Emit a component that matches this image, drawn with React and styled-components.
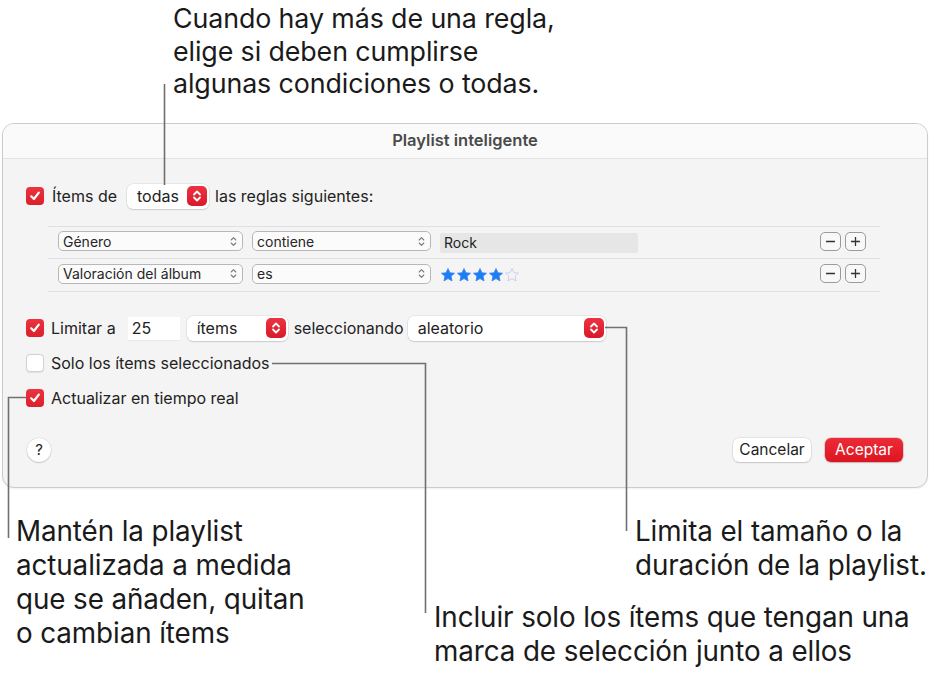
import React from 'react';
import styled, { createGlobalStyle } from 'styled-components';

const GlobalStyle = createGlobalStyle`
  html, body {
    margin: 0;
    padding: 0;
    background: #ffffff;
  }
  * {
    box-sizing: border-box;
  }
`;

const Page = styled.div`
  position: relative;
  width: 931px;
  height: 673px;
  overflow: hidden;
  background: #ffffff;
  color: #1f1f1f;
  font-family: Inter, "Noto Sans", sans-serif;
`;

const Note = styled.p`
  margin: 0;
  padding-left: 16px;
  font-size: 27.8px;
  line-height: 34px;
  color: #1a1a1a;
  letter-spacing: -0.1px;
`;

const TopNote = styled(Note)`
  padding: 2px 0 0 173px;
  font-size: 26.8px;
  line-height: 32.5px;
`;

const Window = styled.div`
  margin: 23px 0 0 2px;
  width: 926px;
  height: 365px;
  border: 1px solid #cbcbcb;
  border-radius: 12px;
  background: #f4f4f4;
  overflow: hidden;
  display: flex;
  flex-direction: column;
  box-shadow: 0 1px 2px rgba(0, 0, 0, 0.06);
`;

const TitleBar = styled.div`
  height: 35px;
  flex: none;
  background: #fafafa;
  border-bottom: 1px solid #e3e3e3;
  text-align: center;
  font-size: 16.5px;
  font-weight: 600;
  line-height: 32px;
  color: #4a4a4a;
`;

const Body = styled.div`
  flex: 1;
  display: flex;
  flex-direction: column;
  padding: 0 24px 0 23px;
  font-size: 16px;
  color: #222222;
`;

const Row = styled.div`
  display: flex;
  align-items: center;
  height: ${(p) => p.$h || 24}px;
  margin-top: ${(p) => p.$top || 0}px;
`;

const Box = styled.span`
  flex: none;
  width: 18px;
  height: 18px;
  border-radius: 4px;
  display: inline-flex;
  align-items: center;
  justify-content: center;
  margin-right: ${(p) => p.$gap || 7}px;
  background: ${(p) => (p.$on ? 'linear-gradient(#ea3440, #dc1f2b)' : '#ffffff')};
  border: ${(p) => (p.$on ? 'none' : '1px solid #d2d2d2')};
  box-shadow: ${(p) => (p.$on ? 'none' : '0 0.5px 1px rgba(0,0,0,0.08)')};
`;

const Label = styled.span`
  margin-right: ${(p) => p.$gap || 0}px;
  white-space: nowrap;
`;

const Popup = styled.span`
  flex: none;
  display: inline-flex;
  align-items: center;
  justify-content: space-between;
  width: ${(p) => p.$w}px;
  height: 25px;
  padding: 0 2px 0 10px;
  margin-right: ${(p) => p.$gap || 0}px;
  background: #ffffff;
  border-radius: 6px;
  box-shadow: 0 0 0 0.5px rgba(0, 0, 0, 0.1), 0 1px 1.5px rgba(0, 0, 0, 0.12);
`;

const Stepper = styled.span`
  width: 20px;
  height: 20px;
  border-radius: 5px;
  background: linear-gradient(#ec3341, #d9192a);
  display: inline-flex;
  align-items: center;
  justify-content: center;
`;

const Field = styled.span`
  flex: none;
  width: 52px;
  height: 23px;
  padding-left: 4px;
  margin-right: 7px;
  background: #ffffff;
  line-height: 23px;
  box-shadow: 0 0.5px 0 rgba(0, 0, 0, 0.08);
`;

const Rules = styled.div`
  margin: 17px 0 0 22px;
  width: 832px;
  border-top: 1px solid #e0e0e0;
`;

const RuleRow = styled.div`
  display: flex;
  align-items: center;
  height: ${(p) => p.$h || 32}px;
  padding: 0 14px 2px 10px;
  border-bottom: 1px solid #e0e0e0;
  font-size: 14px;
`;

const Select = styled.span`
  flex: none;
  display: inline-flex;
  align-items: center;
  justify-content: space-between;
  width: ${(p) => p.$w}px;
  height: 20px;
  margin-right: 9px;
  padding: 0 5px 0 4px;
  border: 1px solid #b7b7b7;
  border-radius: 5px;
  background: #fbfbfb;
  color: #262626;
`;

const TextInput = styled.span`
  flex: none;
  width: 198px;
  height: 20px;
  padding-left: 4px;
  margin-top: 3px;
  border-radius: 2px;
  background: #e6e6e6;
  line-height: 20px;
`;

const Stars = styled.span`
  flex: none;
  display: inline-flex;
  gap: 0;
  margin-top: 2px;
`;

const Spacer = styled.span`
  flex: 1;
`;

const SmallButton = styled.span`
  flex: none;
  width: 21px;
  height: 19px;
  margin-left: ${(p) => p.$gap || 0}px;
  border: 1px solid #9a9a9a;
  border-radius: 5px;
  background: #f8f8f8;
  display: inline-flex;
  align-items: center;
  justify-content: center;
`;

const Footer = styled.div`
  display: flex;
  align-items: center;
  margin-top: 28px;
  padding-left: 1px;
`;

const Help = styled.span`
  width: 24px;
  height: 24px;
  border-radius: 50%;
  background: #ffffff;
  box-shadow: 0 0 0 0.5px rgba(0, 0, 0, 0.12), 0 1px 1.5px rgba(0, 0, 0, 0.15);
  display: inline-flex;
  align-items: center;
  justify-content: center;
  font-size: 15px;
  color: #222;
`;

const Button = styled.span`
  height: 24px;
  width: ${(p) => p.$w}px;
  margin-left: ${(p) => p.$gap || 0}px;
  border-radius: 6px;
  display: inline-flex;
  align-items: center;
  justify-content: center;
  font-size: 15.5px;
  background: ${(p) => (p.$primary ? 'linear-gradient(#ec2b38, #dc1621)' : '#ffffff')};
  color: ${(p) => (p.$primary ? '#ffffff' : '#222222')};
  box-shadow: ${(p) =>
    p.$primary
      ? '0 0 0 0.5px rgba(160,0,0,0.3), 0 1px 1.5px rgba(0,0,0,0.15)'
      : '0 0 0 0.5px rgba(0,0,0,0.12), 0 1px 1.5px rgba(0,0,0,0.15)'};
`;

const Notes = styled.div`
  display: grid;
  grid-template-columns: 418px 201px 1fr;
  grid-template-rows: 86px auto;
  margin-top: 26px;
`;

const LeftNote = styled(Note)`
  grid-column: 1;
  grid-row: 1 / span 2;
`;

const RightNote = styled(Note)`
  grid-column: 3;
  grid-row: 1;
`;

const MiddleNote = styled(Note)`
  grid-column: 2 / span 2;
  grid-row: 2;
`;

const Leaders = styled.svg`
  position: absolute;
  left: 0;
  top: 0;
  pointer-events: none;
`;

const Check = () => (
  <svg width="12" height="12" viewBox="0 0 12 12">
    <path d="M2.2 6.3 L4.9 9 L9.8 2.6" fill="none" stroke="#fff" strokeWidth="2.2" strokeLinecap="round" strokeLinejoin="round" />
  </svg>
);

const UpDown = () => (
  <svg width="10" height="14" viewBox="0 0 10 14">
    <path d="M2 5.5 L5 2.5 L8 5.5 M2 8.5 L5 11.5 L8 8.5" fill="none" stroke="#fff" strokeWidth="1.8" strokeLinecap="round" strokeLinejoin="round" />
  </svg>
);

const SmallUpDown = () => (
  <svg width="7" height="11" viewBox="0 0 7 11">
    <path d="M1.2 4 L3.5 1.6 L5.8 4 M1.2 7 L3.5 9.4 L5.8 7" fill="none" stroke="#7a7a7a" strokeWidth="1.1" strokeLinecap="round" strokeLinejoin="round" />
  </svg>
);

const Star = ({ on }) => (
  <svg width="16" height="16" viewBox="0 0 24 24">
    <path
      d="M12 2.2 L14.9 8.6 L21.8 9.3 L16.6 14 L18.1 20.9 L12 17.4 L5.9 20.9 L7.4 14 L2.2 9.3 L9.1 8.6 Z"
      fill={on ? '#1f7df3' : 'none'}
      stroke={on ? '#1f7df3' : '#c9cbef'}
      strokeWidth={on ? 1 : 1.4}
      strokeLinejoin="round"
    />
  </svg>
);

const Minus = () => (
  <svg width="11" height="11" viewBox="0 0 11 11">
    <path d="M1 5.5 H10" stroke="#333" strokeWidth="1.3" />
  </svg>
);

const Plus = () => (
  <svg width="11" height="11" viewBox="0 0 11 11">
    <path d="M1 5.5 H10 M5.5 1 V10" stroke="#333" strokeWidth="1.3" />
  </svg>
);

const rules = [
  { field: 'Género', op: 'contiene', value: 'Rock' },
  { field: 'Valoración del álbum', op: 'es', rating: 4 },
];

export default function App() {
  return (
    <Page>
      <GlobalStyle />
      <TopNote>
        Cuando hay más de una regla,
        <br />
        elige si deben cumplirse
        <br />
        algunas condiciones o todas.
      </TopNote>

      <Window>
        <TitleBar>Playlist inteligente</TitleBar>
        <Body>
          <Row $h={25} $top={25}>
            <Box $on $gap={8}><Check /></Box>
            <Label $gap={10}>Ítems de</Label>
            <Popup $w={82} $gap={6}>
              todas
              <Stepper><UpDown /></Stepper>
            </Popup>
            <Label>las reglas siguientes:</Label>
          </Row>

          <Rules>
            {rules.map((r, i) => (
              <RuleRow key={r.field} $h={i === 0 ? 32 : 33}>
                <Select $w={185}>{r.field}<SmallUpDown /></Select>
                <Select $w={179}>{r.op}<SmallUpDown /></Select>
                {r.rating ? (
                  <Stars>
                    {[0, 1, 2, 3, 4].map((n) => (
                      <Star key={n} on={n < r.rating} />
                    ))}
                  </Stars>
                ) : (
                  <TextInput>{r.value}</TextInput>
                )}
                <Spacer />
                <SmallButton><Minus /></SmallButton>
                <SmallButton $gap={4}><Plus /></SmallButton>
              </RuleRow>
            ))}
          </Rules>

          <Row $h={25} $top={24}>
            <Box $on><Check /></Box>
            <Label $gap={12}>Limitar a</Label>
            <Field>25</Field>
            <Popup $w={101} $gap={6}>
              ítems
              <Stepper><UpDown /></Stepper>
            </Popup>
            <Label $gap={4}>seleccionando</Label>
            <Popup $w={198}>
              aleatorio
              <Stepper><UpDown /></Stepper>
            </Popup>
          </Row>

          <Row $top={10}>
            <Box />
            <Label>Solo los ítems seleccionados</Label>
          </Row>

          <Row $top={11}>
            <Box $on><Check /></Box>
            <Label>Actualizar en tiempo real</Label>
          </Row>

          <Footer>
            <Help>?</Help>
            <Spacer />
            <Button $w={78}>Cancelar</Button>
            <Button $w={78} $gap={14} $primary>Aceptar</Button>
          </Footer>
        </Body>
      </Window>

      <Notes>
        <LeftNote>
          Mantén la playlist
          <br />
          actualizada a medida
          <br />
          que se añaden, quitan
          <br />
          o cambian ítems
        </LeftNote>
        <RightNote>
          Limita el tamaño o la
          <br />
          duración de la playlist.
        </RightNote>
        <MiddleNote>
          Incluir solo los ítems que tengan una
          <br />
          marca de selección junto a ellos
        </MiddleNote>
      </Notes>

      <Leaders width="931" height="673" viewBox="0 0 931 673">
        <g fill="none" stroke="#707070" strokeWidth="1.6">
          <path d="M164.5 84 V185" />
          <path d="M605 327.5 H626.5 V531" />
          <path d="M272 363.5 H425.5 V613" />
          <path d="M26 397.5 H8.5 V538" />
        </g>
      </Leaders>
    </Page>
  );
}
